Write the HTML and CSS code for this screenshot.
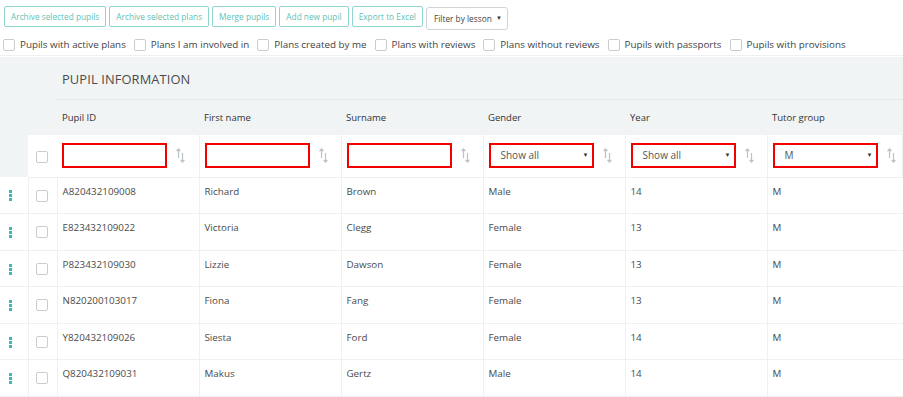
FILE: index.html
```html
<!DOCTYPE html>
<html>
<head>
<meta charset="utf-8">
<link rel="stylesheet" href="styles.css">
</head>
<body>
<div class="toolbar">
  <button class="btn">Archive selected pupils</button>
  <button class="btn">Archive selected plans</button>
  <button class="btn">Merge pupils</button>
  <button class="btn">Add new pupil</button>
  <button class="btn">Export to Excel</button>
  <div class="lesson">Filter by lesson <span class="caret">▼</span></div>
</div>
<div class="filters">
  <label class="chk"><span class="box"></span>Pupils with active plans</label>
  <label class="chk"><span class="box"></span>Plans I am involved in</label>
  <label class="chk"><span class="box"></span>Plans created by me</label>
  <label class="chk"><span class="box"></span>Plans with reviews</label>
  <label class="chk"><span class="box"></span>Plans without reviews</label>
  <label class="chk"><span class="box"></span>Pupils with passports</label>
  <label class="chk"><span class="box"></span>Pupils with provisions</label>
</div>
<table class="grid">
  <colgroup>
    <col class="c-menu"><col class="c-chk"><col class="c-w"><col class="c-w"><col class="c-w"><col class="c-w"><col class="c-w"><col>
  </colgroup>
  <tr class="title-row">
    <td class="g" rowspan="3"></td>
    <td class="g" rowspan="2"></td>
    <td class="title" colspan="6">PUPIL INFORMATION</td>
  </tr>
  <tr class="head-row">
    <td>Pupil ID</td><td>First name</td><td>Surname</td><td>Gender</td><td>Year</td><td>Tutor group</td>
  </tr>
  <tr class="filter-row">
    <td class="cb"><span class="box"></span></td>
    <td><div class="fc"><div class="inp"></div><svg class="sort" viewBox="0 0 9 15"><path d="M2.5 1v9M0.5 3.2L2.5 1l2 2.2M6.5 5v9M4.5 11.8L6.5 14l2-2.2" fill="none" stroke="#b9c2c6" stroke-width="1.2"/></svg></div></td>
    <td><div class="fc"><div class="inp"></div><svg class="sort" viewBox="0 0 9 15"><path d="M2.5 1v9M0.5 3.2L2.5 1l2 2.2M6.5 5v9M4.5 11.8L6.5 14l2-2.2" fill="none" stroke="#b9c2c6" stroke-width="1.2"/></svg></div></td>
    <td><div class="fc"><div class="inp"></div><svg class="sort" viewBox="0 0 9 15"><path d="M2.5 1v9M0.5 3.2L2.5 1l2 2.2M6.5 5v9M4.5 11.8L6.5 14l2-2.2" fill="none" stroke="#b9c2c6" stroke-width="1.2"/></svg></div></td>
    <td><div class="fc"><div class="inp sel">Show all<span class="caret">▼</span></div><svg class="sort" viewBox="0 0 9 15"><path d="M2.5 1v9M0.5 3.2L2.5 1l2 2.2M6.5 5v9M4.5 11.8L6.5 14l2-2.2" fill="none" stroke="#b9c2c6" stroke-width="1.2"/></svg></div></td>
    <td><div class="fc"><div class="inp sel">Show all<span class="caret">▼</span></div><svg class="sort" viewBox="0 0 9 15"><path d="M2.5 1v9M0.5 3.2L2.5 1l2 2.2M6.5 5v9M4.5 11.8L6.5 14l2-2.2" fill="none" stroke="#b9c2c6" stroke-width="1.2"/></svg></div></td>
    <td><div class="fc"><div class="inp sel">M<span class="caret">▼</span></div><svg class="sort" viewBox="0 0 9 15"><path d="M2.5 1v9M0.5 3.2L2.5 1l2 2.2M6.5 5v9M4.5 11.8L6.5 14l2-2.2" fill="none" stroke="#b9c2c6" stroke-width="1.2"/></svg></div></td>
  </tr>
  <tr class="row"><td class="dots"><i></i><i></i><i></i></td><td class="cb"><span class="box"></span></td><td>A820432109008</td><td>Richard</td><td>Brown</td><td>Male</td><td>14</td><td>M</td></tr>
  <tr class="row"><td class="dots"><i></i><i></i><i></i></td><td class="cb"><span class="box"></span></td><td>E823432109022</td><td>Victoria</td><td>Clegg</td><td>Female</td><td>13</td><td>M</td></tr>
  <tr class="row"><td class="dots"><i></i><i></i><i></i></td><td class="cb"><span class="box"></span></td><td>P823432109030</td><td>Lizzie</td><td>Dawson</td><td>Female</td><td>13</td><td>M</td></tr>
  <tr class="row"><td class="dots"><i></i><i></i><i></i></td><td class="cb"><span class="box"></span></td><td>N820200103017</td><td>Fiona</td><td>Fang</td><td>Female</td><td>13</td><td>M</td></tr>
  <tr class="row"><td class="dots"><i></i><i></i><i></i></td><td class="cb"><span class="box"></span></td><td>Y820432109026</td><td>Siesta</td><td>Ford</td><td>Female</td><td>14</td><td>M</td></tr>
  <tr class="row"><td class="dots"><i></i><i></i><i></i></td><td class="cb"><span class="box"></span></td><td>Q820432109031</td><td>Makus</td><td>Gertz</td><td>Male</td><td>14</td><td>M</td></tr>
</table>
</body>
</html>
```
FILE: styles.css
```css
* { box-sizing: border-box; }
html, body { margin: 0; padding: 0; background: #fff; overflow: hidden; }
body { font-family: "Open Sans", "Liberation Sans", sans-serif; color: #444; width: 903px; height: 397px; }

.toolbar { display: flex; align-items: flex-start; gap: 3px; padding: 6px 0 0 4px; height: 34px; }
.btn {
  height: 21px; padding: 0 6px; border: 1px solid #8fd6cf; border-radius: 2px;
  background: #fff; color: #63bfb6; font-family: inherit; font-size: 8.3px; line-height: 19px;
}
.lesson {
  height: 23px; margin-top: 1px; width: 82px; border: 1px solid #cfd4d6; border-radius: 3px;
  font-size: 8.3px; color: #444; line-height: 21px; padding-left: 7px; position: relative;
}
.lesson .caret { position: absolute; right: 5px; top: 0; font-size: 6px; color: #333; }

.filters { display: flex; align-items: center; gap: 8px; padding-left: 3px; height: 22px; border-bottom: 1px solid #eef0f1; }
.chk { display: flex; align-items: center; gap: 5px; font-size: 9.8px; color: #3f3f3f; white-space: nowrap; }
.box { display: inline-block; width: 12px; height: 12px; border: 1px solid #c8cdd0; border-radius: 2px; background: #fff; }

.grid { border-collapse: collapse; table-layout: fixed; width: 903px; margin-top: 1px; font-size: 9.8px; }
.c-menu { width: 28px; }
.c-chk { width: 29px; }
.c-w { width: 142px; }
.grid td { padding: 0 5px; vertical-align: middle; color: #4a4a4a; }
.g { background: #f1f4f5; }
.title-row td { height: 42px; }
.title { background: #f1f4f5; color: #6c8796; font-size: 12.9px; letter-spacing: 0.1px; border-bottom: 1px solid #e3e8ea; padding-top: 2px !important; }
.head-row td { height: 36px; background: #f1f4f5; font-size: 9.5px; color: #333; }
.filter-row td { height: 42px; border-right: 1px solid #eef1f2; border-bottom: 1px solid #eef1f2; }
.filter-row td.cb { text-align: center; border-right: none; }
.filter-row td.cb .box { vertical-align: middle; margin-top: 3px; margin-left: -1px; }
.fc { display: flex; align-items: center; gap: 9px; }
.inp { width: 105px; height: 25px; border: 2px solid #f40000; background: #fff; position: relative; font-size: 10px; color: #555; line-height: 21px; padding-left: 10px; }
.sel .caret { position: absolute; right: 3px; top: 0; font-size: 6px; color: #333; }
.sort { width: 9px; height: 15px; }

.row td { height: 36.6px; border: 1px solid #eef1f2; border-top: none; vertical-align: top; padding-top: 7px; }
.row td:first-child { border-left: none; }
.row td:last-child { border-right: none; }
.row td.cb { padding: 0; text-align: center; vertical-align: top; }
.row td.cb .box { margin-top: 12px; margin-left: -2px; }
.dots { padding: 0 !important; }
.dots i { display: block; width: 3px; height: 3px; background: #3fb7b2; margin: 0 0 0 9px; }
.dots i:first-child { margin-top: 13px; }
.dots i + i { margin-top: 1px; }
```
